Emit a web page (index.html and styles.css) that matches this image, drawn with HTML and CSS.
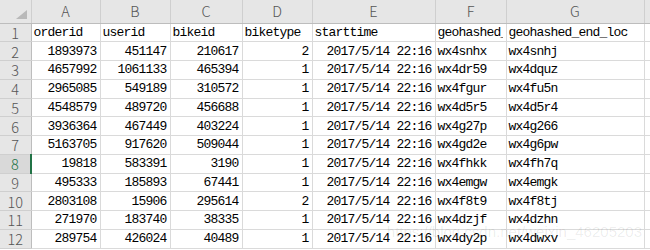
FILE: index.html
```html
<!DOCTYPE html>
<html lang="en">
<head>
  <meta charset="UTF-8" />
  <title>Sheet1</title>
  <link rel="stylesheet" href="styles.css">
</head>
<body>
  <div class="sheet">
    <table class="grid">
      <colgroup>
        <col class="w-head">
        <col class="w-a">
        <col class="w-b">
        <col class="w-c">
        <col class="w-d">
        <col class="w-e">
        <col class="w-f">
        <col class="w-g">
        <col class="w-h">
      </colgroup>
      <thead>
        <tr class="col-head">
          <th class="corner">
            <svg class="corner-mark" width="11" height="9" viewBox="0 0 11 9"><polygon points="11,0 11,9 0,9" fill="#b9b9b9"/></svg>
          </th>
          <th>A</th><th>B</th><th>C</th><th>D</th><th>E</th><th>F</th><th>G</th><th></th>
        </tr>
      </thead>
      <tbody id="rows"></tbody>
    </table>
    <div class="watermark">https://blog.csdn.net/weixin_46205203</div>
  </div>

  <script>
    const header = ["orderid", "userid", "bikeid", "biketype", "starttime", "geohashed_start_loc", "geohashed_end_loc"];

    const data = [
      [1893973, 451147, 210617, 2, "wx4snhx", "wx4snhj"],
      [4657992, 1061133, 465394, 1, "wx4dr59", "wx4dquz"],
      [2965085, 549189, 310572, 1, "wx4fgur", "wx4fu5n"],
      [4548579, 489720, 456688, 1, "wx4d5r5", "wx4d5r4"],
      [3936364, 467449, 403224, 1, "wx4g27p", "wx4g266"],
      [5163705, 917620, 509044, 1, "wx4gd2e", "wx4g6pw"],
      [19818, 583391, 3190, 1, "wx4fhkk", "wx4fh7q"],
      [495333, 185893, 67441, 1, "wx4emgw", "wx4emgk"],
      [2803108, 15906, 295614, 2, "wx4f8t9", "wx4f8tj"],
      [271970, 183740, 38335, 1, "wx4dzjf", "wx4dzhn"],
      [289754, 426024, 40489, 1, "wx4dy2p", "wx4dwxv"]
    ];

    const body = document.getElementById('rows');

    function addRow(num, cells, active) {
      const tr = document.createElement('tr');
      tr.className = active ? 'row active' : 'row';
      let html = `<th class="row-head">${num}</th>`;
      cells.forEach(c => {
        html += `<td class="${c.cls}">${c.text}</td>`;
      });
      html += '<td></td>';
      tr.innerHTML = html;
      body.appendChild(tr);
    }

    addRow(1, header.map((h, i) => ({ text: i === 5 ? '<span class="clip">' + h + '</span>' : h, cls: 'txt' })), false);

    data.forEach((d, i) => {
      addRow(i + 2, [
        { text: d[0], cls: 'num' },
        { text: d[1], cls: 'num' },
        { text: d[2], cls: 'num' },
        { text: d[3], cls: 'num' },
        { text: '2017/5/14 22:16', cls: 'num' },
        { text: d[4], cls: 'txt' },
        { text: d[5], cls: 'txt' }
      ], i + 2 === 8);
    });
  </script>
</body>
</html>
```

FILE: styles.css
```css
/* Excel-like sheet */
body {
  margin: 0;
  background: #fff;
  overflow: hidden;
}

.sheet {
  position: relative;
  width: 650px;
  height: 250px;
  overflow: hidden;
}

.grid {
  border-collapse: collapse;
  table-layout: fixed;
  width: 704px;
}

.w-head { width: 31px; }
.w-a { width: 69px; }
.w-b { width: 70px; }
.w-c { width: 72px; }
.w-d { width: 70px; }
.w-e { width: 123px; }
.w-f { width: 71px; }
.w-g { width: 138px; }
.w-h { width: 60px; }

th {
  background: #e6e6e6;
  color: #555;
  font-family: "Noto Sans CJK SC", "Noto Sans", sans-serif;
  font-weight: 300;
  font-size: 14.5px;
  padding: 0;
  border: 1px solid #cfcfcf;
  text-align: center;
}

.col-head {
  height: 23px;
}

.col-head th {
  border-top: none;
  border-bottom: 1px solid #bdbdbd;
  line-height: 22px;
}

.corner {
  position: relative;
  border-left: none;
}

.corner-mark {
  position: absolute;
  right: 4px;
  bottom: 4px;
}

.row {
  height: 18.75px;
}

.row-head {
  border-left: none;
  border-right: 1px solid #bdbdbd;
  line-height: 17px;
}

.row.active .row-head {
  background: #d9d9d9;
  color: #217346;
  border-right: 2px solid #217346;
}

td {
  border: 1px solid #dadada;
  padding: 0 3px 0 2px;
  font-family: "Liberation Mono", monospace;
  font-size: 13px;
  letter-spacing: -0.8px;
  color: #000;
  white-space: nowrap;
  overflow: hidden;
  line-height: 17px;
}

td.num {
  text-align: right;
}

td.txt {
  text-align: left;
}

.clip {
  display: block;
  overflow: hidden;
}

.watermark {
  position: absolute;
  right: 8px;
  bottom: 10px;
  font-family: "Liberation Sans", sans-serif;
  font-size: 15px;
  color: rgba(0, 0, 0, 0.08);
  white-space: nowrap;
  pointer-events: none;
}
```
